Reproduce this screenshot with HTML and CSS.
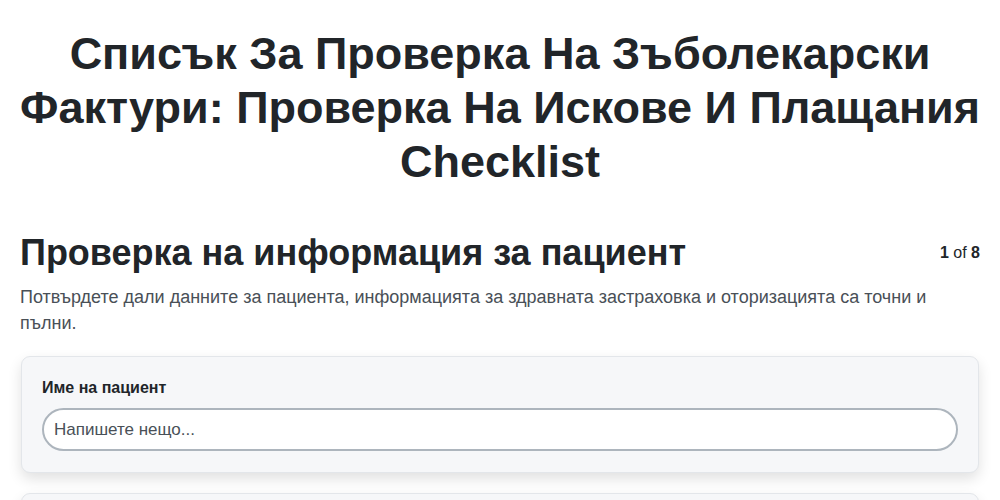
FILE: index.html
```html
<!DOCTYPE html>
<html lang="bg">
<head>
<meta charset="utf-8">
<title>Checklist</title>
<link rel="stylesheet" href="styles.css">
</head>
<body>
<main class="page">
  <h1 class="title">Списък За Проверка На Зъболекарски Фактури: Проверка На Искове И Плащания Checklist</h1>
  <section class="step">
    <div class="step-head">
      <h2 class="step-title">Проверка на информация за пациент</h2>
      <div class="step-count"><b>1</b> of <b>8</b></div>
    </div>
    <p class="step-desc">Потвърдете дали данните за пациента, информацията за здравната застраховка и оторизацията са точни и пълни.</p>
    <div class="card">
      <label class="field-label" for="name">Име на пациент</label>
      <input class="field-input" id="name" type="text" placeholder="Напишете нещо...">
    </div>
    <div class="card"></div>
  </section>
</main>
</body>
</html>
```
FILE: styles.css
```css
* { box-sizing: border-box; }
html, body { margin: 0; padding: 0; background: #fff; }
body {
  font-family: "Liberation Sans", Arial, sans-serif;
  color: #212529;
  overflow: hidden;
}
.page {
  padding: 27px 20px 20px;
}
.title {
  margin: 0;
  font-size: 45px;
  line-height: 54px;
  font-weight: 700;
  text-align: center;
  color: #212529;
}
.step { margin-top: 43px; }
.step-head {
  display: flex;
  justify-content: space-between;
  align-items: center;
}
.step-title {
  margin: 0;
  font-size: 36px;
  line-height: 42px;
  font-weight: 700;
}
.step-count {
  font-size: 16px;
  color: #212529;
}
.step-desc {
  margin: 10px 0 20px;
  font-size: 18px;
  line-height: 26px;
  color: #495057;
}
.card {
  background: #f6f7f9;
  border: 1px solid #e3e6ea;
  border-radius: 9px;
  box-shadow: 0 6px 14px rgba(0, 0, 0, 0.12);
  padding: 20px 20px 21px;
  margin: 0 1px 20px;
}
.field-label {
  display: block;
  font-size: 16px;
  font-weight: 700;
  line-height: 20px;
  margin-bottom: 10px;
  margin-top: 1px;
}
.field-input {
  display: block;
  width: 100%;
  height: 43px;
  border: 2px solid #adb5bd;
  border-radius: 22px;
  background: #fff;
  padding: 0 10px;
  font-family: "Liberation Sans", Arial, sans-serif;
  font-size: 17px;
  color: #212529;
  outline: none;
}
.field-input::placeholder { color: #495057; opacity: 1; }
```
